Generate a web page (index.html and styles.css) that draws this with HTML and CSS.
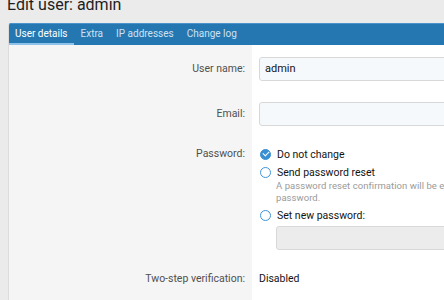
FILE: index.html
```html
<!DOCTYPE html>
<html>
<head>
    <title>Edit user: admin</title>
    <link rel="stylesheet" href="styles.css">
</head>
<body>
    <h1 class="page-title">Edit user: admin</h1>
    <div class="block">
        <div class="tabs">
            <a class="tab active">User details</a>
            <a class="tab">Extra</a>
            <a class="tab">IP addresses</a>
            <a class="tab">Change log</a>
        </div>
        <div class="form-body">
            <div class="form-row input-row">
                <div class="label">User name:</div>
                <div class="field"><div class="input">admin</div></div>
            </div>
            <div class="form-row input-row">
                <div class="label">Email:</div>
                <div class="field"><div class="input"></div></div>
            </div>
            <div class="form-row password-row">
                <div class="label">Password:</div>
                <div class="field">
                    <div class="choice"><span class="radio checked"></span>Do not change</div>
                    <div class="choice"><span class="radio"></span>Send password reset</div>
                    <div class="choice-hint">A password reset confirmation will be emailed to the user, allowing them to set a new<br>password.</div>
                    <div class="choice"><span class="radio"></span>Set new password:</div>
                    <div class="input sub-input disabled"></div>
                </div>
            </div>
            <div class="form-row twostep-row">
                <div class="label">Two-step verification:</div>
                <div class="field"><div class="plain">Disabled</div></div>
            </div>
        </div>
    </div>
</body>
</html>
```

FILE: styles.css
```css
* {
    margin: 0;
    padding: 0;
    box-sizing: border-box;
}

body {
    font-family: Roboto, 'Noto Sans', sans-serif;
    font-size: 10.5px;
    background: #ebebeb;
    color: #141414;
    overflow: hidden;
    width: 444px;
    height: 300px;
}

.page-title {
    font-size: 16px;
    font-weight: 400;
    color: #1e1e1e;
    margin: -5px 0 8px 7px;
    height: 20px;
    line-height: 20px;
}

.block {
    margin-left: 8px;
    width: 700px;
    border-left: 1px solid #dcdcdc;
    border-radius: 3px 0 0 0;
    overflow: hidden;
}

.tabs {
    display: flex;
    background: #2577b1;
    border-top: 1px solid #4b94cb;
    height: 22px;
}

.tab {
    color: #cde2f3;
    padding: 0 6px 0 6px;
    margin-right: 1px;
    line-height: 19px;
    font-size: 10px;
    border-bottom: 2px solid transparent;
}

.tab.active {
    color: #ffffff;
    border-bottom-color: #8fc2ea;
}

.form-body {
    background: linear-gradient(to right, #f5f5f5 0, #f5f5f5 243px, #ffffff 243px);
    padding-top: 12px;
    height: 300px;
}

.form-row {
    display: flex;
}

.label {
    width: 243px;
    flex-shrink: 0;
    text-align: right;
    padding-right: 7px;
    color: #505050;
    line-height: 18px;
}

.field {
    flex: 1;
    padding-left: 7px;
}

.input-row {
    margin-bottom: 21px;
}

.input-row .label {
    padding-top: 3px;
}

.input {
    height: 24px;
    border: 1px solid #d8d8d8;
    border-radius: 3px;
    background: #f6f9fc;
    padding: 0 5px;
    line-height: 22px;
    font-size: 11px;
    color: #141414;
}

.input.disabled {
    background: #ececec;
}

.password-row {
    margin-top: -2px;
    margin-bottom: 20px;
}

.choice {
    display: flex;
    align-items: center;
    height: 18px;
}

.radio {
    width: 11px;
    height: 11px;
    margin-left: 1px;
    border: 1.5px solid #3f93d8;
    border-radius: 50%;
    margin-right: 6px;
    position: relative;
}

.radio.checked {
    background: #3a8fd3;
    border-color: #3a8fd3;
}

.radio.checked::after {
    content: '';
    position: absolute;
    left: 2.5px;
    top: 0.5px;
    width: 3px;
    height: 5px;
    border: solid #fff;
    border-width: 0 1.5px 1.5px 0;
    transform: rotate(45deg);
}

.choice-hint {
    padding-left: 17px;
    font-size: 9.5px;
    letter-spacing: 0.05px;
    color: #9a9a9a;
    line-height: 12px;
    white-space: nowrap;
    margin-top: -1px;
    margin-bottom: 2px;
}

.sub-input {
    margin: 2px 0 0 17px;
}

.plain {
    line-height: 18px;
}
```
